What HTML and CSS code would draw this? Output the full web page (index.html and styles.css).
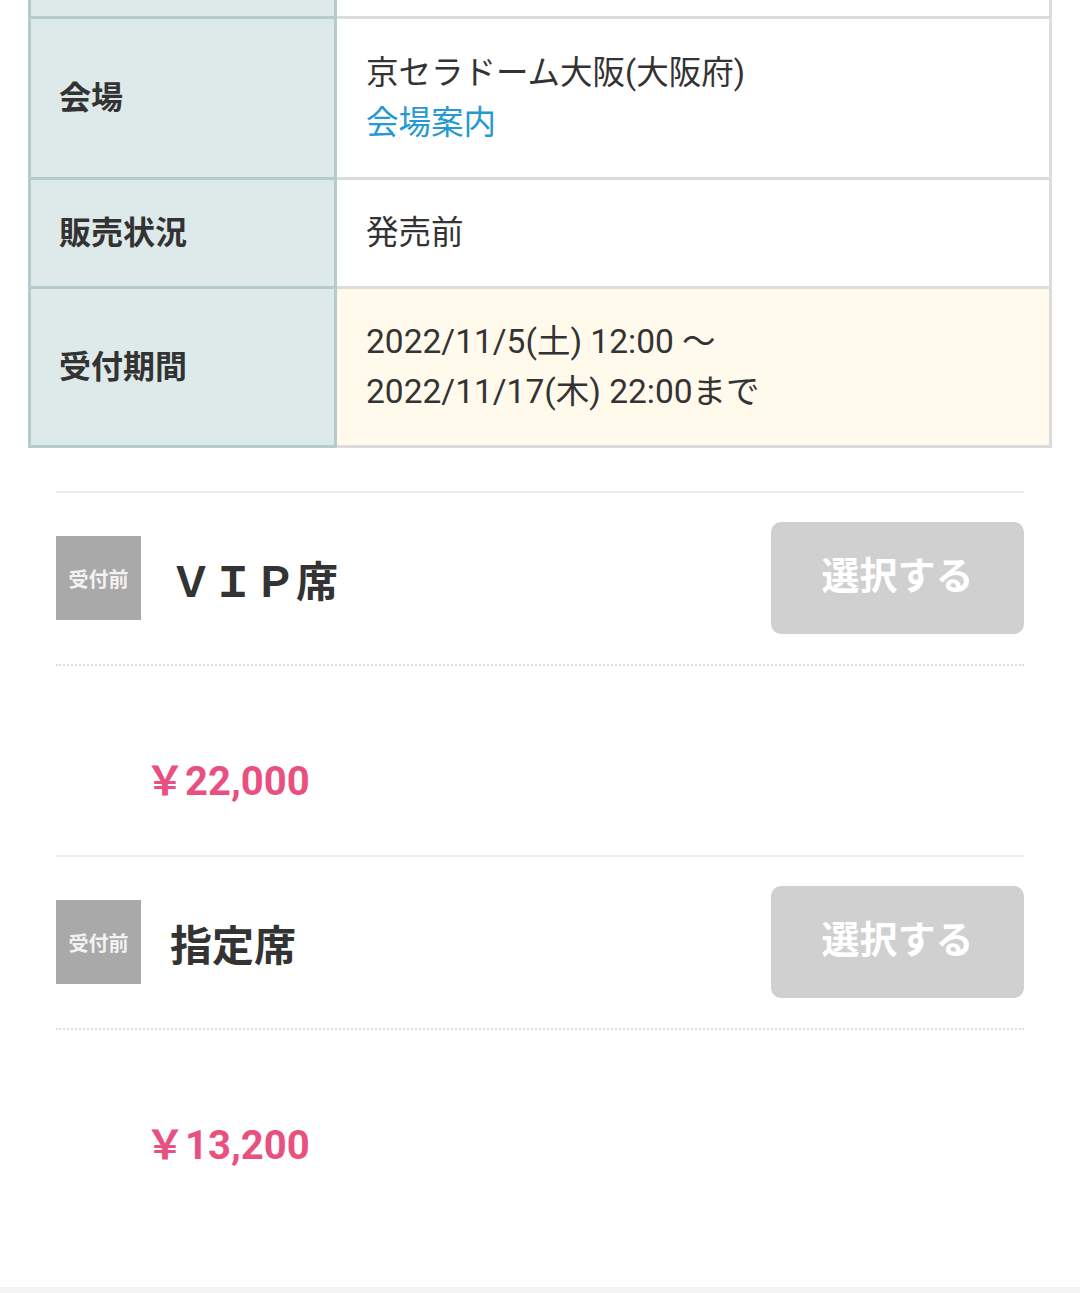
FILE: index.html
```html
<!DOCTYPE html>
<html lang="ja">
<head>
    <meta charset="UTF-8">
    <meta name="viewport" content="width=device-width, initial-scale=1.0">
    <title>公演詳細</title>
    <link rel="stylesheet" href="styles.css">
</head>
<body>
    <main>
        <table class="info-table">
            <tr class="row-cut">
                <th><div class="cut"></div></th>
                <td><div class="cut"></div></td>
            </tr>
            <tr>
                <th class="tall">会場</th>
                <td class="tall">
                    京セラドーム大阪(大阪府)<br>
                    <a href="#" class="venue-link">会場案内</a>
                </td>
            </tr>
            <tr>
                <th>販売状況</th>
                <td>発売前</td>
            </tr>
            <tr>
                <th>受付期間</th>
                <td class="period">
                    2022/11/5(土) 12:00 ～<br>
                    2022/11/17(木) 22:00まで
                </td>
            </tr>
        </table>

        <ul class="ticket-list">
            <li class="ticket">
                <div class="ticket-head">
                    <span class="badge">受付前</span>
                    <span class="ticket-name">ＶＩＰ席</span>
                    <button type="button" class="select-btn" disabled>選択する</button>
                </div>
                <div class="ticket-price">￥22,000</div>
            </li>
            <li class="ticket">
                <div class="ticket-head">
                    <span class="badge">受付前</span>
                    <span class="ticket-name">指定席</span>
                    <button type="button" class="select-btn" disabled>選択する</button>
                </div>
                <div class="ticket-price">￥13,200</div>
            </li>
        </ul>
    </main>

    <footer></footer>
</body>
</html>
```

FILE: styles.css
```css
body {
    font-family: Roboto, "Noto Sans CJK JP", sans-serif;
    margin: 0;
    padding: 0;
    background-color: #fff;
    color: #333;
    overflow: hidden;
}
main {
    padding-bottom: 68px;
}
.info-table {
    width: calc(100% - 56px);
    margin: -60px 28px 0 28px;
    border-collapse: collapse;
    font-size: 32px;
    line-height: 50px;
}
.info-table th,
.info-table td {
    padding: 28px 29px;
    border: 3px solid #dcdcdc;
    text-align: left;
    vertical-align: middle;
}
.info-table th {
    box-sizing: border-box;
    width: 306px;
    padding-left: 28px;
    background-color: #deeaea;
    border-color: #b6cccc;
    font-weight: bold;
}
.info-table td {
    font-size: 32.5px;
    font-weight: normal;
}
.info-table .tall {
    padding-top: 29px;
    padding-bottom: 29px;
}
.info-table .row-cut th,
.info-table .row-cut td {
    padding: 0;
}
.cut {
    height: 73px;
}
.venue-link {
    color: #2499d2;
    text-decoration: none;
}
.info-table .period {
    background-color: #fffaec;
    font-size: 33.5px;
}
.ticket-list {
    list-style: none;
    margin: 43px 56px 0;
    padding: 0;
}
.ticket {
    border-top: 2px solid #ececec;
}
.ticket-head {
    display: flex;
    align-items: center;
    padding: 29px 0 30px;
    border-bottom: 2px dotted #dedede;
}
.badge {
    display: flex;
    align-items: center;
    justify-content: center;
    width: 85px;
    height: 84px;
    flex-shrink: 0;
    background-color: #a9a9a9;
    color: #f2f2f2;
    font-size: 20px;
    font-weight: bold;
}
.ticket-name {
    margin-left: 29px;
    font-size: 42px;
    font-weight: bold;
    color: #333;
}
.select-btn {
    margin-left: auto;
    width: 253px;
    height: 112px;
    border: none;
    border-radius: 10px;
    background-color: #d0d0d0;
    color: #fff;
    font-family: inherit;
    font-size: 38px;
    font-weight: bold;
    line-height: 1;
    padding: 0 0 4px;
}
.ticket-price {
    padding: 91px 0 48px 89px;
    font-size: 40px;
    line-height: 50px;
    font-weight: bold;
    color: #e9507f;
}
footer {
    height: 200px;
    background-color: #f3f3f3;
}
```
